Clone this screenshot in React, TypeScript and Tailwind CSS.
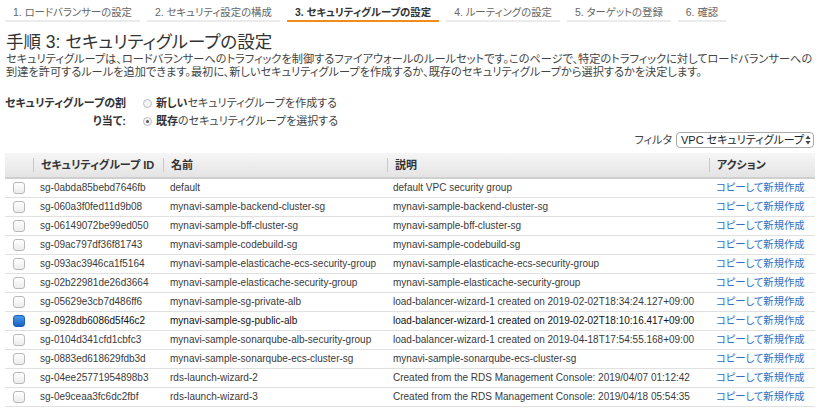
import React from 'react';

const tabs = [
  { label: '1. ロードバランサーの設定', active: false },
  { label: '2. セキュリティ設定の構成', active: false },
  { label: '3. セキュリティグループの設定', active: true },
  { label: '4. ルーティングの設定', active: false },
  { label: '5. ターゲットの登録', active: false },
  { label: '6. 確認', active: false },
];

const groups = [
  ['sg-0abda85bebd7646fb', 'default', 'default VPC security group'],
  ['sg-060a3f0fed11d9b08', 'mynavi-sample-backend-cluster-sg', 'mynavi-sample-backend-cluster-sg'],
  ['sg-06149072be99ed050', 'mynavi-sample-bff-cluster-sg', 'mynavi-sample-bff-cluster-sg'],
  ['sg-09ac797df36f81743', 'mynavi-sample-codebuild-sg', 'mynavi-sample-codebuild-sg'],
  ['sg-093ac3946ca1f5164', 'mynavi-sample-elasticache-ecs-security-group', 'mynavi-sample-elasticache-ecs-security-group'],
  ['sg-02b22981de26d3664', 'mynavi-sample-elasticache-security-group', 'mynavi-sample-elasticache-security-group'],
  ['sg-05629e3cb7d486ff6', 'mynavi-sample-sg-private-alb', 'load-balancer-wizard-1 created on 2019-02-02T18:34:24.127+09:00'],
  ['sg-0928db6086d5f46c2', 'mynavi-sample-sg-public-alb', 'load-balancer-wizard-1 created on 2019-02-02T18:10:16.417+09:00'],
  ['sg-0104d341cfd1cbfc3', 'mynavi-sample-sonarqube-alb-security-group', 'load-balancer-wizard-1 created on 2019-04-18T17:54:55.168+09:00'],
  ['sg-0883ed618629fdb3d', 'mynavi-sample-sonarqube-ecs-cluster-sg', 'mynavi-sample-sonarqube-ecs-cluster-sg'],
  ['sg-04ee25771954898b3', 'rds-launch-wizard-2', 'Created from the RDS Management Console: 2019/04/07 01:12:42'],
  ['sg-0e9ceaa3fc6dc2fbf', 'rds-launch-wizard-3', 'Created from the RDS Management Console: 2019/04/18 05:54:35'],
];

const SELECTED = 'sg-0928db6086d5f46c2';

const Checkbox = ({ checked }: { checked: boolean }) =>
  checked ? (
    <span className="block w-[12px] h-[12px] rounded-[3px] border border-[#1b5fb8] bg-gradient-to-b from-[#4a98ec] to-[#1a62c4]" />
  ) : (
    <span className="block w-[12px] h-[12px] rounded-[3px] border border-[#b9b9b9] bg-gradient-to-b from-white to-[#ececec]" />
  );

const Radio = ({ checked }: { checked: boolean }) => (
  <span className="w-[9px] h-[9px] rounded-full border border-[#bdbdbd] bg-[#f3f3f3] flex items-center justify-center mr-[4px]">
    {checked && <span className="w-[3px] h-[3px] rounded-full bg-[#555]" />}
  </span>
);

const cols = 'grid grid-cols-[28px_130px_224px_322px_106px]';

export default function App() {
  return (
    <div className="w-[821px] h-[410px] overflow-hidden bg-white px-[5px] text-[#444] font-['Liberation_Sans','Noto_Sans_CJK_JP',sans-serif] [font-feature-settings:'palt']">
      <div className="flex gap-[7px]">
        {tabs.map((t) => (
          <div
            key={t.label}
            className={
              'h-[22px] pt-[6px] px-[8px] leading-[14px] text-[10.4px] border-b-2 ' +
              (t.active ? 'border-[#f08c1a] text-[#333] font-bold' : 'border-[#ebebeb] text-[#666]')
            }
          >
            {t.label}
          </div>
        ))}
      </div>

      <h1 className="mt-[10px] pl-px text-[17.5px] leading-[20px] text-[#333]">手順 3: セキュリティグループの設定</h1>
      <p className="mt-px pl-px text-[11.2px] leading-[13px] whitespace-nowrap">
        セキュリティグループは、ロードバランサーへのトラフィックを制御するファイアウォールのルールセットです。このページで、特定のトラフィックに対してロードバランサーへの
        <br />
        到達を許可するルールを追加できます。最初に、新しいセキュリティグループを作成するか、既存のセキュリティグループから選択するかを決定します。
      </p>

      <div className="mt-[15px] flex text-[11px] leading-[18px]">
        <div className="w-[121px] flex flex-col items-end font-bold text-[#333] whitespace-nowrap">
          <span>セキュリティグループの割</span>
          <span>り当て:</span>
        </div>
        <div className="ml-[17px]">
          <div className="flex items-center">
            <Radio checked={false} />
            <span><b className="text-[#333]">新しい</b>セキュリティグループを作成する</span>
          </div>
          <div className="flex items-center">
            <Radio checked={true} />
            <span><b className="text-[#333]">既存</b>のセキュリティグループを選択する</span>
          </div>
        </div>
      </div>

      <div className="mt-[2px] flex justify-end items-center text-[11px] pr-[2px]">
        <span className="mr-[4px]">フィルタ</span>
        <div className="h-[16px] w-[138px] border border-[#a9a9a9] rounded-[4px] flex items-center justify-between pl-[4px] pr-[2px] text-[#222]">
          <span>VPC セキュリティグループ</span>
          <svg width="6" height="10" viewBox="0 0 6 10">
            <path d="M3 0.5 L5.5 4 H0.5 Z" fill="#444" />
            <path d="M3 9.5 L5.5 6 H0.5 Z" fill="#444" />
          </svg>
        </div>
      </div>

      <div className="mt-[4px] w-[810px] text-[10px]">
        <div className={cols + ' h-[26px] items-center bg-gradient-to-b from-[#f6f6f6] to-[#e4e4e4] border-b-2 border-[#cfcfcf] font-bold text-[#333] text-[11px]'}>
          <div />
          <div className="border-l border-[#c9c9c9] pl-[7px] leading-[14px]">セキュリティグループ ID</div>
          <div className="border-l border-[#c9c9c9] pl-[7px] leading-[14px]">名前</div>
          <div className="border-l border-[#c9c9c9] pl-[7px] leading-[14px]">説明</div>
          <div className="border-l border-[#c9c9c9] pl-[7px] leading-[14px]">アクション</div>
        </div>
        {groups.map(([id, name, desc]) => (
          <div
            key={id}
            className={cols + ' h-[19px] items-center border-b border-[#e1e1e1] ' + (id === SELECTED ? 'text-[#111]' : 'text-[#3a3a3a]')}
          >
            <div className="pl-[8px]">
              <Checkbox checked={id === SELECTED} />
            </div>
            <div className="pl-[7px]">{id}</div>
            <div className="pl-[7px]">{name}</div>
            <div className="pl-[6px]">{desc}</div>
            <div className="pl-[7px] text-[10.3px] text-[#2f6fc4]">コピーして新規作成</div>
          </div>
        ))}
      </div>
    </div>
  );
}
